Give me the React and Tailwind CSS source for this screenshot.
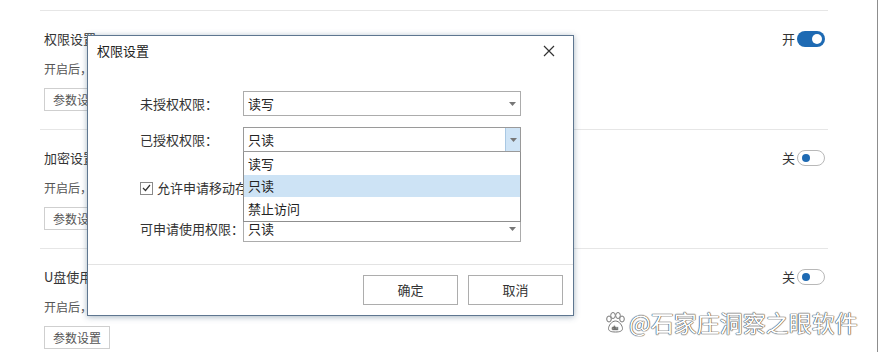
import React from 'react';

const font = { fontFamily: '"Noto Sans CJK SC", "Microsoft YaHei", sans-serif' };

const rows = [
  { title: '权限设置', desc: '开启后，未授权的移动存储设备将按照设置的权限使用', on: true },
  { title: '加密设置', desc: '开启后，移动存储设备中的文件将自动加密', on: false },
  { title: 'U盘使用审计', desc: '开启后，记录移动存储设备的使用情况', on: false },
];

const Toggle = ({ on }) => (
  <div className="flex items-center gap-[2px] text-[13px] text-[#333]">
    <span>{on ? '开' : '关'}</span>
    {on ? (
      <div className="w-[28px] h-[16px] rounded-full bg-[#1e6ab3] flex items-center justify-end pr-[3px]">
        <div className="w-[10px] h-[10px] rounded-full bg-white" />
      </div>
    ) : (
      <div className="w-[28px] h-[16px] rounded-full border border-[#b8b8b8] bg-white flex items-center pl-[4px]">
        <div className="w-[8px] h-[8px] rounded-full bg-[#1e6ab3]" />
      </div>
    )}
  </div>
);

const Arrow = () => (
  <svg width="7" height="4" viewBox="0 0 7 4">
    <path d="M0 0h7L3.5 4z" fill="#777" />
  </svg>
);

const Select = ({ value, focused }) => (
  <div className={`w-[278px] h-[25px] shrink-0 border flex items-center bg-white ${focused ? 'border-[#9a9a9a]' : 'border-[#acacac]'}`}>
    <span className="flex-1 pl-[4px] text-[13px] text-[#222]">{value}</span>
    {focused ? (
      <div className="w-[15px] h-full bg-[#cfe4f6] border-l border-[#a9c8e3] flex items-center justify-center">
        <Arrow />
      </div>
    ) : (
      <div className="w-[15px] h-full flex items-center justify-center">
        <Arrow />
      </div>
    )}
  </div>
);

export default function App() {
  return (
    <div className="relative w-[880px] h-[352px] bg-white overflow-hidden" style={font}>
      {/* background settings page */}
      <div className="w-[878px] h-full border-r border-[#8d8d8d] pt-[10px]">
        <div className="ml-[40px] w-[788px]">
          {rows.map((r) => (
            <div key={r.title} className="border-t border-[#e6e6e6] h-[119px] pl-[4px] pr-[3px]">
              <div className="flex items-center justify-between h-[20px] mt-[18px]">
                <span className="text-[13px] text-[#333]">{r.title}</span>
                <Toggle on={r.on} />
              </div>
              <div className="h-[20px] mt-[10px] flex items-center text-[12px] text-[#555]">{r.desc}</div>
              <button className="mt-[9px] w-[66px] h-[23px] border border-[#cfcfcf] text-[12px] text-[#555] bg-white">
                参数设置
              </button>
            </div>
          ))}
        </div>
      </div>

      {/* modal dialog */}
      <div className="absolute left-[87px] top-[35px] w-[487px] h-[281px] bg-white border border-[#5e7690] shadow-[0_1px_6px_rgba(60,90,120,0.45)] flex flex-col">
        <div className="h-[30px] flex items-center justify-between pl-[9px] pr-[18px]">
          <span className="text-[13px] text-[#222]">权限设置</span>
          <svg width="12" height="12" viewBox="0 0 12 12">
            <path d="M1 1l10 10M11 1L1 11" stroke="#333" strokeWidth="1.2" />
          </svg>
        </div>

        <div className="flex-1 pl-[52px] pt-[25px] relative">
          <div className="flex items-center h-[25px]">
            <span className="w-[103px] shrink-0 whitespace-nowrap text-[13px] text-[#333]">未授权权限：</span>
            <Select value="读写" />
          </div>
          <div className="flex items-center h-[25px] mt-[11px]">
            <span className="w-[103px] shrink-0 whitespace-nowrap text-[13px] text-[#333]">已授权权限：</span>
            <Select value="只读" focused />
          </div>
          <div className="flex items-center h-[14px] mt-[29px] gap-[4px]">
            <div className="w-[13px] h-[13px] shrink-0 border border-[#8a8a8a] flex items-center justify-center">
              <svg width="9" height="8" viewBox="0 0 9 8">
                <path d="M1 4l2.5 2.5L8 1" stroke="#333" strokeWidth="1.2" fill="none" />
              </svg>
            </div>
            <span className="w-[86px] overflow-hidden text-[13px] text-[#333] whitespace-nowrap">允许申请移动存储设备使用权限</span>
          </div>
          <div className="flex items-center h-[24px] mt-[22px]">
            <span className="w-[103px] shrink-0 whitespace-nowrap text-[13px] text-[#333]">可申请使用权限：</span>
            <Select value="只读" />
          </div>

          {/* open dropdown list */}
          <div className="absolute left-[155px] top-[86px] w-[278px] h-[70px] bg-white border border-[#8f8f8f] border-t-0 flex flex-col text-[13px] text-[#222]">
            <div className="h-[23px] flex items-center pl-[4px]">读写</div>
            <div className="h-[22px] flex items-center pl-[4px] bg-[#cde3f5]">只读</div>
            <div className="h-[24px] flex items-center pl-[4px]">禁止访问</div>
          </div>
        </div>

        <div className="h-[51px] border-t border-[#e3e3e3] flex items-start justify-end gap-[10px] pt-[10px] pr-[10px]">
          <button className="w-[95px] h-[30px] border border-[#adadad] bg-white text-[13px] text-[#333]">确定</button>
          <button className="w-[95px] h-[30px] border border-[#adadad] bg-white text-[13px] text-[#333]">取消</button>
        </div>
      </div>

      {/* watermark */}
      <div className="absolute left-[604px] top-[305px] flex items-center gap-[3px] text-[23px] text-white [text-shadow:0_0_1px_#444,0_0_1px_#444,0_0_1px_#444]">
        <svg width="22" height="22" viewBox="0 0 22 22">
          <g fill="white" stroke="#777" strokeWidth="1">
            <ellipse cx="5" cy="8" rx="2.3" ry="3" />
            <ellipse cx="9" cy="4.5" rx="2.3" ry="3" />
            <ellipse cx="14" cy="4.5" rx="2.3" ry="3" />
            <ellipse cx="18" cy="8" rx="2.3" ry="3" />
            <path d="M11.5 10c-4 0-7 5-7 7.5S7 21 11.5 21 18.5 20 18.5 17.5 15.5 10 11.5 10z" />
          </g>
          <text x="8" y="19" fontSize="5" fill="#777">du</text>
        </svg>
        <span>@石家庄洞察之眼软件</span>
      </div>
    </div>
  );
}
